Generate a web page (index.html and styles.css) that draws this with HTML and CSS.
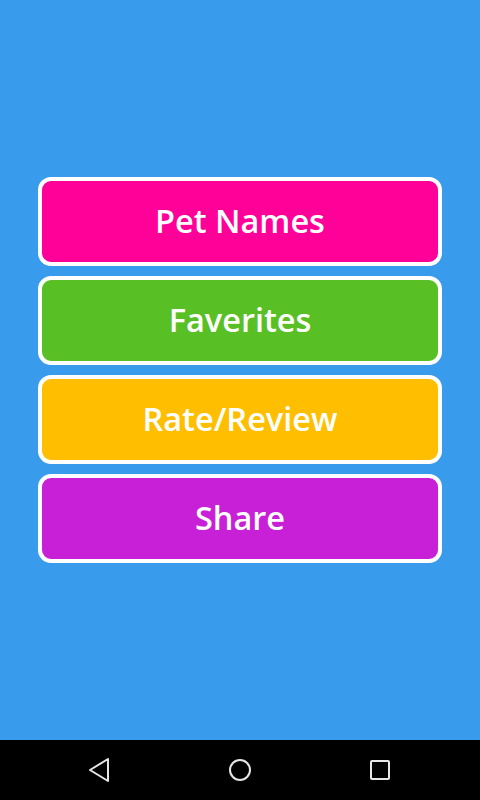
FILE: index.html
```html
<!DOCTYPE html>
<html>
<head>
<meta charset="utf-8">
<link rel="stylesheet" href="styles.css">
</head>
<body>
<div class="screen">
  <main class="content">
    <div class="menu">
      <div class="btn pink">Pet Names</div>
      <div class="btn green">Faverites</div>
      <div class="btn yellow">Rate/Review</div>
      <div class="btn purple">Share</div>
    </div>
  </main>
  <nav class="navbar">
    <svg class="nav-icon" width="24" height="26" viewBox="0 0 24 26"><path d="M21 2 L21 24 L3 13 Z" fill="none" stroke="#e6e6e6" stroke-width="2" stroke-linejoin="round"/></svg>
    <svg class="nav-icon" width="24" height="24" viewBox="0 0 24 24"><circle cx="12" cy="12" r="10" fill="none" stroke="#e6e6e6" stroke-width="2"/></svg>
    <svg class="nav-icon" width="24" height="24" viewBox="0 0 24 24"><rect x="3" y="3" width="18" height="18" rx="1" fill="none" stroke="#e6e6e6" stroke-width="2"/></svg>
  </nav>
</div>
</body>
</html>
```

FILE: styles.css
```css
html, body {
  margin: 0;
  padding: 0;
}
body {
  width: 480px;
  height: 800px;
  overflow: hidden;
  font-family: "Open Sans", "DejaVu Sans", sans-serif;
}
.screen {
  display: flex;
  flex-direction: column;
  height: 800px;
}
.content {
  flex: 1;
  background: #399bec;
  display: flex;
  align-items: center;
  justify-content: center;
}
.menu {
  width: 404px;
  display: flex;
  flex-direction: column;
  gap: 10px;
}
.btn {
  box-sizing: border-box;
  height: 89px;
  border: 4px solid #ffffff;
  border-radius: 13px;
  display: flex;
  align-items: center;
  justify-content: center;
  color: #ffffff;
  font-size: 32.5px;
  font-weight: 600;
  padding-bottom: 2px;
}
.pink { background: #ff0098; }
.green { background: #58c024; }
.yellow { background: #ffbf00; }
.purple { background: #c820d6; }
.navbar {
  height: 60px;
  background: #000000;
  display: flex;
  align-items: center;
  justify-content: space-between;
  padding: 0 88px 0 87px;
}
.nav-icon {
  display: block;
}
```
